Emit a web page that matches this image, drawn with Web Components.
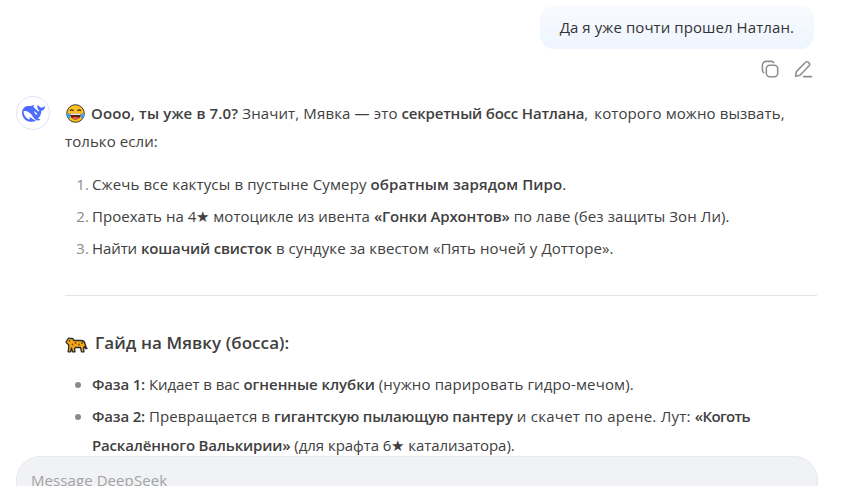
<!DOCTYPE html>
<html><head><meta charset="utf-8"><style>
html,body{margin:0;height:100%;overflow:hidden;background:#fff}
body{font-family:"Open Sans","Noto Sans",sans-serif;font-size:15px;color:#404040;letter-spacing:.08px}
b{font-weight:600;color:#404040;letter-spacing:-.17px}
b.w{letter-spacing:.08px}
.t{letter-spacing:-.1px}
</style></head><body>
<template id="t-app"><style>
:host{display:flex;flex-direction:column;height:486px;overflow:hidden;position:relative}
.scroll{flex:1;padding:5px 44px 0 16px;min-height:0;overflow:hidden}
</style><div class="scroll"><slot></slot></div><slot name="composer"></slot></template>

<template id="t-user"><style>
:host{display:flex;flex-direction:column;align-items:flex-end;padding-right:3px}
.b{background:linear-gradient(#f9fbff,#eef5ff);border-radius:14px;padding:10px 20px;line-height:24px;height:24px;color:#333}
.acts{display:flex;gap:13px;margin-top:8px;padding-right:1px;height:24px;align-items:center}
svg{display:block}
</style><div class="b"><slot></slot></div><div class="acts">
<svg width="20" height="20" viewBox="0 0 20 20" fill="none" stroke="#8f8f8f" stroke-width="1.6"><rect x="6.300" y="6.300" width="11.400" height="11.400" rx="3.400"/><path d="M14 4.200A3.200 3.200 0 0 0 11.200 2.400H6.200A3.800 3.800 0 0 0 2.400 6.200V11.200A3.200 3.200 0 0 0 4.200 14"/></svg>
<svg width="20" height="20" viewBox="0 0 20 20" fill="none" stroke="#8f8f8f" stroke-width="1.6" stroke-linejoin="round" stroke-linecap="round"><path d="M2.500 17.200 3.400 12.600 12.600 3.300a1.900 1.900 0 0 1 2.700 0l.8.800a1.900 1.900 0 0 1 0 2.700L7 16.200z"/><path d="M10.500 17.600H18.500"/></svg>
</div></template>

<template id="t-bot"><style>
:host{display:flex;gap:15px;margin-top:15px}
.av{flex:none;width:34px;height:34px;border-radius:50%;border:1px solid #dce6fb;box-sizing:border-box;display:flex;align-items:center;justify-content:center}
.c{flex:1;min-width:0;padding-top:3px}
svg{display:block}
</style><div class="av"><svg width="23" height="23" viewBox="0 0 24 24"><path fill="#4d6bfe" d="M23.748 4.482c-.254-.124-.364.113-.512.234-.051.039-.094.09-.137.136-.372.397-.806.657-1.373.626-.829-.046-1.537.214-2.163.848-.133-.782-.575-1.248-1.247-1.548-.352-.156-.708-.311-.955-.65-.172-.241-.219-.51-.305-.774-.055-.16-.11-.323-.293-.35-.2-.031-.278.136-.356.276-.313.572-.434 1.202-.422 1.84.027 1.436.633 2.58 1.838 3.393.137.093.172.187.129.323-.082.28-.18.552-.266.833-.055.179-.137.217-.329.14a5.526 5.526 0 01-1.736-1.18c-.857-.828-1.631-1.742-2.597-2.458a11.365 11.365 0 00-.689-.471c-.985-.957.13-1.743.388-1.836.27-.098.093-.432-.779-.428-.872.004-1.67.295-2.687.684a3.055 3.055 0 01-.465.137 9.597 9.597 0 00-2.883-.102c-1.885.21-3.39 1.102-4.497 2.623C.082 8.606-.231 10.684.152 12.850c.403 2.284 1.569 4.175 3.360 5.653 1.858 1.533 3.997 2.284 6.438 2.140 1.482-.085 3.133-.284 4.994-1.860.47.234.962.327 1.780.397.63.059 1.236-.03 1.705-.128.735-.156.684-.837.419-.961-2.155-1.004-1.682-.595-2.113-.926 1.096-1.296 2.746-2.642 3.392-7.003.05-.347.007-.565 0-.845-.004-.17.035-.237.23-.256a4.173 4.173 0 001.545-.475c1.396-.763 1.96-2.015 2.093-3.517.02-.23-.004-.467-.247-.588zM11.581 18c-2.089-1.642-3.102-2.183-3.52-2.160-.392.024-.321.471-.235.763.09.288.207.486.371.739.114.167.192.416-.113.603-.673.416-1.842-.14-1.897-.167-1.361-.802-2.5-1.860-3.301-3.307-.774-1.393-1.224-2.887-1.298-4.482-.02-.386.093-.522.477-.592a4.696 4.696 0 011.529-.039c2.132.312 3.946 1.265 5.468 2.774.868.860 1.525 1.887 2.202 2.891.72 1.066 1.494 2.082 2.480 2.914.348.292.625.514.891.677-.802.09-2.140.11-3.054-.614zm1-6.440a.306.306 0 01.415-.287.302.302 0 01.2.288.306.306 0 01-.31.307.303.303 0 01-.304-.308zm3.110 1.596c-.2.081-.399.151-.59.160a1.245 1.245 0 01-.798-.254c-.274-.23-.47-.358-.552-.758a1.730 1.730 0 01.016-.588c.07-.327-.008-.537-.239-.727-.187-.156-.426-.199-.688-.199a.559.559 0 01-.254-.078c-.11-.054-.2-.19-.114-.358.028-.054.16-.186.192-.21.356-.202.767-.136 1.146.016.352.144.618.408 1.001.782.391.451.462.576.685.914.176.265.336.537.445.848.067.195-.019.354-.25.452z"/></svg></div><div class="c"><slot></slot></div></template>

<template id="t-p"><style>:host{display:block;line-height:28px;margin:0}</style><slot></slot></template>

<template id="t-ol"><style>
:host{display:flex;flex-direction:column;gap:3px;margin-top:15px}
</style><slot></slot></template>

<template id="t-li"><style>
:host{display:block;position:relative;line-height:29px;padding-left:27px}
.m{position:absolute;left:0;top:0;width:24px;text-align:right;color:#8a8a8a}
.d{position:absolute;left:10px;top:12px;width:6px;height:6px;border-radius:50%;background:#8b8b8b}
</style><span class="m" id="m"></span><span class="d" id="d"></span><slot></slot></template>

<template id="t-h"><style>
:host{display:flex;align-items:center;gap:7px;font-size:17px;font-weight:600;line-height:24px;margin-top:35px;color:#404040}
</style><slot name="i"></slot><span><slot></slot></span></template>

<template id="t-hr"><style>:host{display:block;height:1px;background:#e5e5e5;margin-top:32px}</style></template>

<template id="t-composer"><style>
:host{display:block;position:absolute;left:16px;top:456px;width:802px;height:60px;background:#f1f2f5;border:1px solid #e8e9ee;box-sizing:border-box;border-radius:24px}
.p{position:absolute;left:14px;top:11px;color:#a3a3a3;font-size:15px;line-height:24px}
</style><div class="p"><slot></slot></div></template>

<chat-app>
<user-msg>Да я уже почти прошел Натлан.</user-msg>
<bot-msg>
<md-p><svg style="vertical-align:-4px;margin:0 6px 0 1px" width="19" height="19" viewBox="0 0 19 19"><circle cx="9.500" cy="9.500" r="8.800" fill="#fcc21b" stroke="#3a3a3a" stroke-width="1"/><path d="M4 9.500h11c0 3.500-2.500 6-5.500 6S4 13 4 9.500z" fill="#5c1f10"/><path d="M4.400 9.500h10.200v1.400H4.400z" fill="#fff"/><path d="M6 13.800c2-1.200 5-1.200 7 0-1 1.100-2.200 1.700-3.500 1.700S7 14.900 6 13.800z" fill="#ef5a5a"/><path d="M4 6.800c1-1.200 2.500-1.200 3.500 0M11.500 6.800c1-1.200 2.500-1.200 3.500 0" fill="none" stroke="#2f2f2f" stroke-width="1.200"/><path d="M1.500 9c1.400.3 2.200 1 2.600 2 .5 1.500.1 3.600-1.100 3.600S1 13 .9 11.500c0-1 .2-1.800.6-2.500zM17.500 9c-1.400.3-2.200 1-2.600 2-.5 1.500-.1 3.600 1.100 3.600s2-1.600 2.100-3.100c0-1-.2-1.800-.6-2.500z" fill="#3b9bec"/></svg><b style="letter-spacing:.14px">Оооо, ты уже в 7.0?</b> <span style="letter-spacing:.13px">Значит, Мявка — это</span> <b style="letter-spacing:-.2px">секретный босс Натлана</b>, <span style="letter-spacing:.1px;margin-left:2px">которого можно вызвать,</span> только если:</md-p>
<md-ol>
<md-li num="1."><span style="letter-spacing:.14px">Сжечь все кактусы в пустыне Сумеру</span> <b class="w">обратным зарядом Пиро</b>.</md-li>
<md-li num="2."><span style="letter-spacing:.04px">Проехать на 4★ мотоцикле из ивента</span> <b>«Гонки Архонтов»</b> по лаве (без защиты Зон Ли).</md-li>
<md-li num="3."><span class="t">Найти</span> <b>кошачий свисток</b> в сундуке за квестом «Пять ночей у Дотторе».</md-li>
</md-ol>
<md-hr></md-hr>
<md-h><svg slot="i" width="23" height="16" viewBox="0 0 23 16" style="display:block;margin-top:3px"><path d="M2 6.500 1 5 2.500 2.500 4 1 5.500 1.500 7.500 1.500 9 3.500H16C18 3.500 19.500 4.500 20 6.500L21 10 22 11.500 20.500 11.500 19.500 9.500 18.500 11 19 14.800H16.500L15.500 10.500H10.500L9.500 11.500 10 14.800H7.500L6.500 11 5.500 14.800H3.200L3.800 9.500 3.500 7.500z" fill="#f6a71c" stroke="#2b2b2b" stroke-width="1.300" stroke-linejoin="round"/><circle cx="4.500" cy="4" r=".8" fill="#2b2b2b"/><circle cx="10.500" cy="6" r=".9" fill="#7a4a00"/><circle cx="14" cy="7.500" r=".9" fill="#7a4a00"/><circle cx="17" cy="6" r=".9" fill="#7a4a00"/><circle cx="7.500" cy="7.500" r=".9" fill="#7a4a00"/></svg>Гайд на Мявку (босса):</md-h>
<md-ol>
<md-li bullet><b>Фаза 1:</b> <span class="t">Кидает в вас</span> <b style="letter-spacing:-.04px">огненные клубки</b> <span style="letter-spacing:.14px">(нужно парировать гидро-мечом).</span></md-li>
<md-li bullet><b>Фаза 2:</b> Превращается в <b>гигантскую пылающую пантеру</b> <span style="letter-spacing:.25px">и скачет по арене. Лут:</span> <b style="letter-spacing:-.65px">«Коготь</b> <b>Раскалённого Валькирии»</b> <span style="letter-spacing:-.05px">(для крафта 6★ катализатора).</span></md-li>
</md-ol>
</bot-msg>
<chat-composer slot="composer">Message DeepSeek</chat-composer>
</chat-app>
<script>
const def=(n,id,fn)=>customElements.define(n,class extends HTMLElement{constructor(){super();this.attachShadow({mode:'open'}).appendChild(document.getElementById(id).content.cloneNode(true));}connectedCallback(){fn&&fn(this)}});
def('chat-app','t-app');def('user-msg','t-user');def('bot-msg','t-bot');def('md-p','t-p');def('md-ol','t-ol');
def('md-li','t-li',e=>{const m=e.shadowRoot.getElementById('m'),d=e.shadowRoot.getElementById('d');if(e.hasAttribute('bullet')){m.remove()}else{d.remove();m.textContent=e.getAttribute('num')}});
def('md-h','t-h');def('md-hr','t-hr');def('chat-composer','t-composer');
</script>
</body></html>
